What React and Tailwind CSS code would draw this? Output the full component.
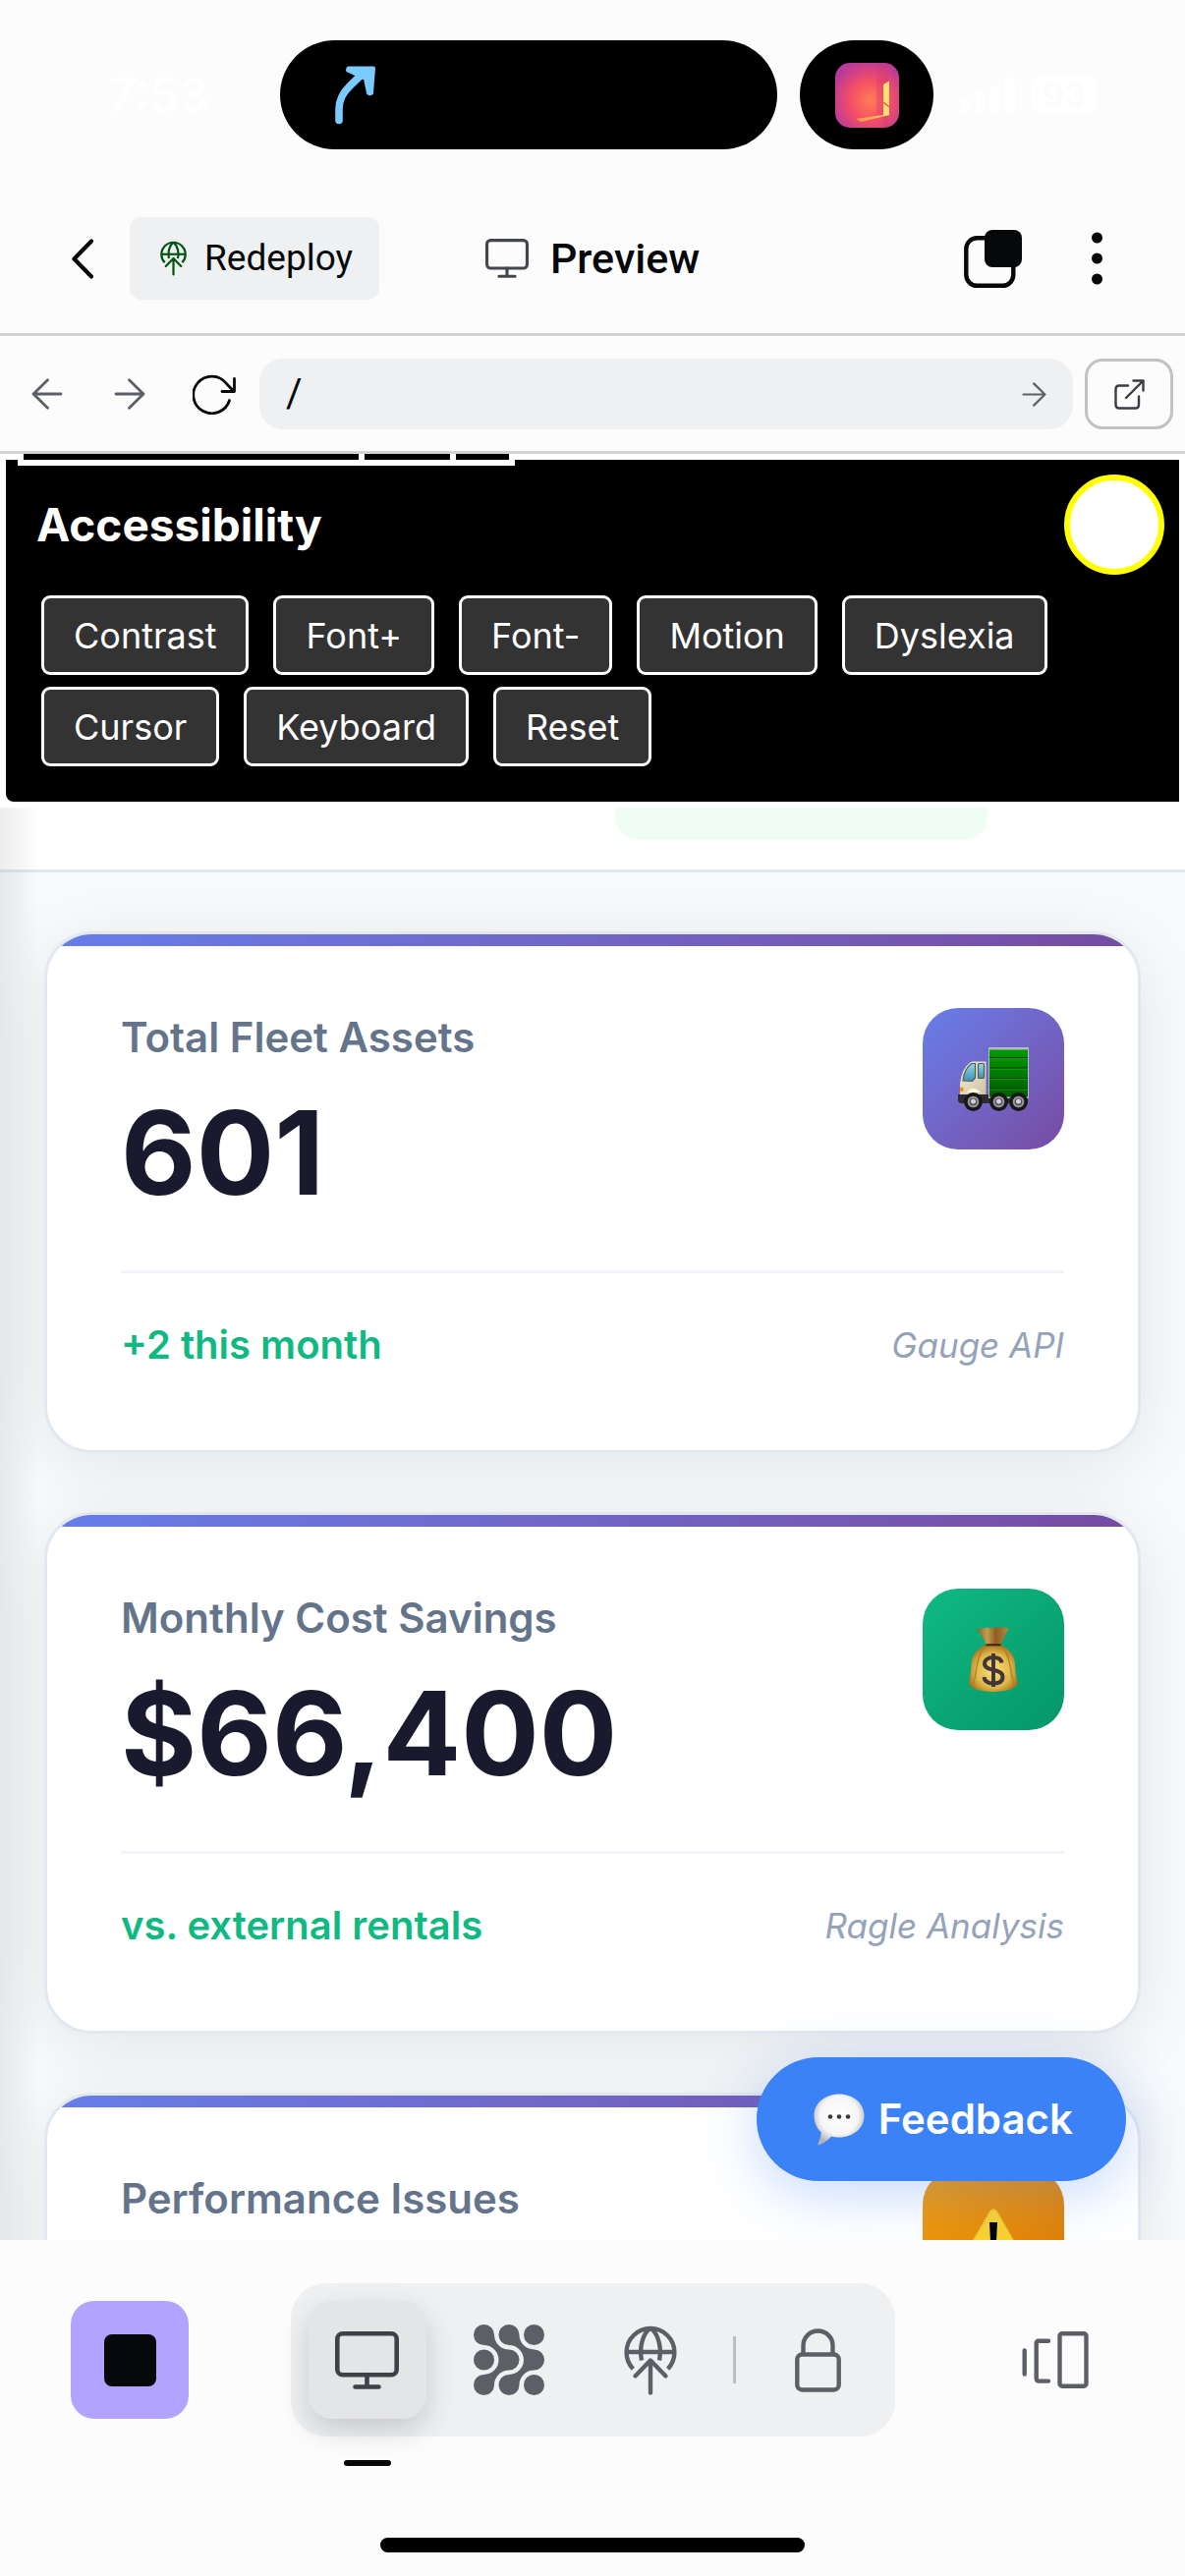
import React from 'react';

const ACCESS_ACTIONS = ['Contrast', 'Font+', 'Font-', 'Motion', 'Dyslexia', 'Cursor', 'Keyboard', 'Reset'];

function MonitorIcon({ className }) {
  return (
    <svg viewBox="0 0 65 59" className={className} fill="none" stroke="currentColor" strokeWidth="4.6" strokeLinecap="round" strokeLinejoin="round" aria-hidden="true">
      <rect x="2.3" y="2.3" width="60.4" height="42" rx="5.5" />
      <path d="M32.5 44.5V56.5M20.5 56.5H44.5" />
    </svg>
  );
}

function GlobeUpIcon({ className }) {
  return (
    <svg viewBox="0 0 54 71" className={className} fill="none" stroke="currentColor" strokeWidth="4.4" strokeLinecap="round" strokeLinejoin="round" aria-hidden="true">
      <g strokeLinecap="butt">
        <path d="M9.3 44.2A24.4 24.4 0 1 1 44.7 44.2" />
        <path d="M2.6 27H51.4" />
        <path d="M27 2.6C18.500 9 15.500 23 18 35.500M27 2.600C35.500 9 38.500 23 36 35.500" />
      </g>
      <path d="M27 36V68.500M11.500 51.500L27 35.500L42.500 51.500" />
    </svg>
  );
}

function BlobGridIcon({ className }) {
  const blob =
    'M10.5 0A15 15 0 0 0 25.5 15A10.5 10.5 0 0 1 25.5 36A15 15 0 0 0 10.5 51A10.500 10.500 0 1 1 0 40.500A15 15 0 0 0 0 10.500A10.500 10.500 0 1 1 10.500 0Z';
  return (
    <svg viewBox="-10.5 -10.5 72 72" className={className} fill="currentColor" aria-hidden="true">
      <path d={blob} />
      <path d={blob} transform="translate(25.5 0)" />
      <circle cx="0" cy="25.5" r="10.5" />
      <circle cx="51" cy="0" r="10.5" />
      <circle cx="51" cy="51" r="10.5" />
    </svg>
  );
}

function ArrowIcon({ className }) {
  return (
    <svg viewBox="0 0 32 32" className={className} fill="none" stroke="currentColor" strokeWidth="2.8" strokeLinecap="round" strokeLinejoin="round" aria-hidden="true">
      <path d="M2 16H30M15.500 1.800L30 16L15.500 30.200" />
    </svg>
  );
}

function TruckArt() {
  return (
    <svg viewBox="0 0 72 65" className="h-[65px] w-[72px]" aria-hidden="true">
      <defs>
        <linearGradient id="box" x1="0" y1="0" x2="0" y2="1">
          <stop offset="0" stopColor="#009a00" />
          <stop offset="1" stopColor="#005c00" />
        </linearGradient>
        <linearGradient id="cab" x1="0" y1="0" x2="1" y2="1">
          <stop offset="0" stopColor="#f3ecd6" />
          <stop offset="1" stopColor="#cfc4a6" />
        </linearGradient>
        <linearGradient id="glass" x1="0" y1="0" x2="0" y2="1">
          <stop offset="0" stopColor="#8fdbe6" />
          <stop offset="1" stopColor="#3d8fb5" />
        </linearGradient>
      </defs>
      <path d="M0 48H71V57H3Q0 57 0 53Z" fill="#2c2c30" />
      <rect x="31" y="0" width="41" height="52" fill="#b5b8c6" />
      <rect x="32" y="2.500" width="39" height="48" fill="url(#box)" />
      <path d="M32 10.500H71M32 21H71M32 31.500H71M32 42H71" stroke="#013f01" strokeWidth="1.200" />
      <path d="M32 11.700H71M32 22.200H71M32 32.700H71M32 43.200H71" stroke="#22a322" strokeWidth=".7" />
      <path d="M2 48V37Q4 21 13 15Q14 14.500 16 14.500H28.500V48Z" fill="url(#cab)" />
      <path d="M5 34Q6 22 14 16.500H17.500V31L14.500 34.500Z" fill="url(#glass)" stroke="#57594f" strokeWidth="1.200" />
      <rect x="20.500" y="16.500" width="6" height="15" rx="1" fill="url(#glass)" stroke="#57594f" strokeWidth="1.200" />
      <path d="M9 46Q15 38 23 46Z" fill="#fff8dc" />
      <rect x="2" y="40.500" width="3.500" height="4.500" rx="1.500" fill="#ff8a00" />
      {[15.5, 41.5, 61.5].map((cx) => (
        <g key={cx}>
          <circle cx={cx} cy="55.500" r="9.400" fill="#17171a" />
          <circle cx={cx} cy="55.500" r="6" fill="#56565c" />
          <circle cx={cx} cy="55.500" r="4.800" fill="none" stroke="#a4a4aa" strokeWidth="1.500" />
          <circle cx={cx} cy="55" r="2.500" fill="#d2d2d6" />
        </g>
      ))}
    </svg>
  );
}

function MoneyBagArt() {
  return (
    <svg viewBox="0 0 50 66" className="h-[66px] w-[50px]" aria-hidden="true">
      <defs>
        <radialGradient id="bag" cx=".5" cy=".55" r=".6">
          <stop offset="0" stopColor="#fbe07c" />
          <stop offset=".6" stopColor="#dfb848" />
          <stop offset="1" stopColor="#9a6416" />
        </radialGradient>
        <linearGradient id="neck" x1="0" y1="0" x2="1" y2="0">
          <stop offset="0" stopColor="#8a5f22" />
          <stop offset=".35" stopColor="#c79a4e" />
          <stop offset=".6" stopColor="#8d5f22" />
          <stop offset="1" stopColor="#b98a45" />
        </linearGradient>
      </defs>
      <path d="M7 1.500Q13 3 18 .5Q23 2 27 .3Q34 0 41 1.500Q37 7 32.500 18.500H18Q14 8 7 1.500Z" fill="url(#neck)" />
      <path d="M17.500 18Q4 24 2.500 36Q2 48 0 57Q3 65.500 25 66Q46 65.500 50 57.500Q47 48 47 36Q45 24 32.500 18Z" fill="url(#bag)" />
      <path d="M18 19Q8 27 6.500 52M32 19Q42 27 43.500 52M12 26Q8 38 5 58M38 26Q43 38 45.500 58" fill="none" stroke="#a87422" strokeWidth="1" opacity=".7" />
      <path d="M17.500 18.200H32.500" stroke="#3e2508" strokeWidth="2" />
      <path d="M33.500 36.500C33 32.500 29.500 31 25 31C19.500 31 16 33.500 16 37.500C16 46 34.500 41.500 34.500 51C34.500 55.500 30.500 57.500 25 57.500C19.500 57.500 16 55.500 15.500 51M25 27V61" fill="none" stroke="#43363a" strokeWidth="4" />
    </svg>
  );
}

function WarningArt() {
  return (
    <svg viewBox="0 0 72 64" className="h-[64px] w-[72px]" aria-hidden="true">
      <path d="M32.500 2.500Q36 -1.500 39.500 2.500L71 57Q73 63 67 64H5Q-1 63 1 57Z" fill="#fbd22f" stroke="#f5b324" strokeWidth="1" />
      <path d="M32 14H40L38.500 43H33.500Z" fill="#000" />
      <circle cx="36" cy="52" r="4.500" fill="#000" />
    </svg>
  );
}

function SpeechArt() {
  return (
    <svg viewBox="0 0 52 53" className="h-[53px] w-[52px]" aria-hidden="true">
      <defs>
        <radialGradient id="speech" cx=".5" cy=".42" r=".58">
          <stop offset="0" stopColor="#ffffff" />
          <stop offset=".65" stopColor="#f6f6f6" />
          <stop offset="1" stopColor="#b4b4b4" />
        </radialGradient>
      </defs>
      <path d="M26 .5C40.500 .5 51.500 10 51.500 22.500C51.500 35 40.500 44.500 26 44.500C23 44.500 20.500 44.200 18 43.500C14 48 9 51.500 4.500 52.500C4 51 8 45 7.500 39C3 35 .5 29 .5 22.500C.5 10 11.500 .5 26 .5Z" fill="url(#speech)" />
      <g fill="#3a3a3a">
        <circle cx="17" cy="23.500" r="2.300" />
        <circle cx="26" cy="23.500" r="2.300" />
        <circle cx="35" cy="23.500" r="2.300" />
      </g>
    </svg>
  );
}

function AlbumArt() {
  return (
    <svg viewBox="0 0 65 66" className="h-[66px] w-[65px] rounded-[15px]" aria-hidden="true">
      <defs>
        <radialGradient id="album" cx=".55" cy=".58" r=".62">
          <stop offset="0" stopColor="#ff7d56" />
          <stop offset=".5" stopColor="#f54f64" />
          <stop offset="1" stopColor="#b93a98" />
        </radialGradient>
        <linearGradient id="beam" x1="0" y1="0" x2="1" y2="0">
          <stop offset="0" stopColor="#ff8b4e" />
          <stop offset="1" stopColor="#ffd76a" />
        </linearGradient>
      </defs>
      <rect width="65" height="66" fill="url(#album)" />
      <path d="M42 6L54 0V66H49V54L42 52Z" fill="#d83a70" opacity=".35" />
      <path d="M49 53L55 51.500V53L26 60L21 57Z" fill="url(#beam)" />
      <path d="M49 22L55 18.500V53L49 54Z" fill="#ffe070" />
      <path d="M49 40L55 45" stroke="#e8593e" strokeWidth="1.500" />
    </svg>
  );
}

function StatusBar() {
  return (
    <div className="flex items-center pt-[41px] pb-[35px] text-white">
      <span className="w-[285px] pl-[111px] text-[48px] leading-[60px] font-semibold">7:53</span>
      <div className="flex h-[111px] flex-1 items-center rounded-full bg-black pl-[56px]">
        <svg viewBox="0 0 42 60" className="h-[60px] w-[42px]" fill="none" stroke="#7ccbff" aria-hidden="true">
          <path d="M4 55.500V44C4 33 9 26.500 15 20.500L30 6" strokeWidth="7.600" strokeLinecap="round" />
          <path d="M13.500 2.500H39L37 27.500Q35.500 29 34 27.500L31 13L13 4.500Z" fill="#7ccbff" strokeWidth="4" strokeLinejoin="round" />
        </svg>
      </div>
      <div className="ml-[23px] flex h-[111px] w-[136px] items-center justify-center rounded-full bg-black">
        <AlbumArt />
      </div>
      <div className="flex w-[256px] items-center gap-4 pl-7">
        <svg viewBox="0 0 55 35" className="h-[35px] w-[55px]" fill="currentColor" aria-hidden="true">
          <rect x="0" y="22" width="10" height="13" rx="3" />
          <rect x="15" y="15" width="10" height="20" rx="3" />
          <rect x="30" y="8" width="10" height="27" rx="3" />
          <rect x="45" y="0" width="10" height="35" rx="3" />
        </svg>
        <span className="rounded-xl bg-white px-3 text-[34px] leading-[39px] font-semibold text-[#fcfcfc]">93</span>
      </div>
    </div>
  );
}

function TitleBar() {
  return (
    <header className="grid grid-cols-[1fr_auto_1fr] items-center border-b-[3px] border-[#d4d4d4] px-12 py-[34px] font-[Roboto,sans-serif] text-[#07080a]">
      <div className="flex items-center gap-3">
        <button type="button" aria-label="Back" className="flex h-[84px] w-[72px] items-center justify-center">
          <svg viewBox="0 0 22 41" className="h-[41px] w-[22px]" fill="none" stroke="currentColor" strokeWidth="4.200" strokeLinecap="round" strokeLinejoin="round" aria-hidden="true">
            <path d="M20 2.500L2.500 20.500L20 38.500" />
          </svg>
        </button>
        <button type="button" className="flex h-[84px] items-center gap-[18px] rounded-xl bg-[#eff0f2] pr-[27px] pl-[31px] text-[37px]">
          <GlobeUpIcon className="h-[36px] w-[27px] text-[#00540f]" />
          Redeploy
        </button>
      </div>
      <h1 className="flex items-center gap-[22px] text-[43px] leading-[60px] font-medium">
        <MonitorIcon className="h-[40px] w-[44px] text-[#45474f]" />
        Preview
      </h1>
      <div className="flex items-center justify-end gap-[34px] pr-[6px]">
        <button type="button" aria-label="Switch layout" className="flex h-[84px] w-[72px] items-center justify-center">
          <svg viewBox="0 0 59 59" className="h-[59px] w-[59px]" aria-hidden="true">
            <rect x="2.300" y="8.300" width="48" height="48.500" rx="11" fill="none" stroke="currentColor" strokeWidth="4.400" />
            <rect x="21" y="0" width="38" height="38" rx="8" fill="currentColor" />
          </svg>
        </button>
        <button type="button" aria-label="More options" className="flex h-[84px] w-[72px] items-center justify-center">
          <svg viewBox="0 0 11 54" className="h-[54px] w-[11px]" fill="currentColor" aria-hidden="true">
            <circle cx="5.500" cy="6" r="5.500" />
            <circle cx="5.500" cy="27" r="5.500" />
            <circle cx="5.500" cy="48" r="5.500" />
          </svg>
        </button>
      </div>
    </header>
  );
}

function AddressBar() {
  return (
    <div className="flex items-center gap-3 border-b-[3px] border-[#d4d4d4] px-3 pt-[23px] pb-[22px] text-[#5d5f67]">
      <button type="button" aria-label="Go back" className="flex h-[72px] w-[72px] items-center justify-center">
        <ArrowIcon className="h-[32px] w-[32px] rotate-180" />
      </button>
      <button type="button" aria-label="Go forward" className="flex h-[72px] w-[72px] items-center justify-center">
        <ArrowIcon className="h-[32px] w-[32px]" />
      </button>
      <button type="button" aria-label="Reload" className="flex h-[72px] w-[72px] items-center justify-end pr-3 text-[#07080a]">
        <svg viewBox="0 0 44 41" className="h-[41px] w-[44px]" fill="none" stroke="currentColor" strokeWidth="2.800" strokeLinecap="round" strokeLinejoin="round" aria-hidden="true">
          <path d="M37.500 26.500A18.800 18.800 0 1 1 34.500 9.500L42 17.500M42.500 4.500V17.500H30" />
        </svg>
      </button>
      <form className="flex h-[72px] min-w-0 flex-1 items-center rounded-3xl bg-[#eff0f2] pr-[27px] pl-[27px]" onSubmit={(e) => e.preventDefault()}>
        <input aria-label="Page path" defaultValue="/" className="min-w-0 flex-1 bg-transparent font-[Roboto,sans-serif] text-[40px] leading-[48px] text-[#07080a] outline-none" />
        <button type="submit" aria-label="Open path">
          <ArrowIcon className="h-[25px] w-[25px]" />
        </button>
      </form>
      <button type="button" aria-label="Open in new tab" className="flex h-[72px] w-[90px] items-center justify-center rounded-[18px] border-[3px] border-[#c0c3c2] text-[#3b3d45]">
        <svg viewBox="0 0 31 31" className="h-[31px] w-[31px]" fill="none" stroke="currentColor" strokeWidth="2.400" strokeLinecap="round" strokeLinejoin="round" aria-hidden="true">
          <path d="M14 6.500H5Q1.500 6.500 1.500 10V26Q1.500 29.500 5 29.500H21.500Q25 29.500 25 26V17.500M19.500 1.500H29.500V11.500M29.500 1.500L12 19" />
        </svg>
      </button>
    </div>
  );
}

function AccessibilityPanel() {
  return (
    <section className="relative rounded-bl-[14px] border-[6px] border-white bg-black pb-9 text-white">
      <div className="absolute -top-[6px] left-3 flex gap-[6px] bg-white px-[6px] pb-[6px]">
        <div className="h-[6px] w-[341px] bg-black" />
        <div className="h-[6px] w-[87px] bg-black" />
        <div className="h-[6px] w-[54px] bg-black" />
      </div>
      <div className="flex items-center justify-between pt-[15px] pr-[15px] pl-[31px]">
        <h2 className="text-[46px] leading-[60px] font-bold">Accessibility</h2>
        <button type="button" aria-label="Close accessibility panel" className="h-[102px] w-[102px] rounded-full border-[6px] border-[#ffff00] bg-white" />
      </div>
      <div className="mt-[21px] flex flex-wrap gap-x-[25px] gap-y-3 pl-9">
        {ACCESS_ACTIONS.map((name) => (
          <button key={name} type="button" className="h-[81px] rounded-[9px] border-[3px] border-white bg-[#333333] px-[30px] text-[36px] leading-[48px]">
            {name}
          </button>
        ))}
      </div>
    </section>
  );
}

function MetricCard({ label, value, note, source, tile, children }) {
  return (
    <article className="overflow-hidden rounded-[48px] border-[3px] border-[#e2e8f0] bg-white shadow-[0_12px_72px_rgba(0,0,0,0.09)]">
      <div className="h-3 bg-linear-to-r from-[#667eea] to-[#764ba2]" />
      <div className="px-[75px] pt-[63px] pb-[75px]">
        <div className="flex items-start justify-between pb-12">
          <div>
            <h3 className="text-[42px] leading-[60px] font-semibold text-[#64748b]">{label}</h3>
            <p className="mt-[15px] text-[118px] leading-[144px] font-bold text-[#1a1a2e]">{value}</p>
          </div>
          <div className={`flex h-[144px] w-[144px] shrink-0 items-center justify-center rounded-[36px] ${tile}`}>{children}</div>
        </div>
        <div className="flex items-center justify-between border-t-[3px] border-[#f1f5f9] pt-[43px] pb-[2px]">
          <span className="text-[40px] leading-[60px] font-semibold text-[#10b981]">{note}</span>
          <span className="text-[35px] leading-[60px] text-[#94a3b8] italic">{source}</span>
        </div>
      </div>
    </article>
  );
}

function PreviewPage() {
  return (
    <main className="relative min-h-0 flex-1 overflow-hidden bg-[#f8fafc]">
      <div className="bg-white">
        <AccessibilityPanel />
      </div>
      <div className="relative">
        <div className="flex justify-end border-b-[3px] border-[#e2e8f0] bg-white pr-[201px] pb-[30px]">
          <div className="h-[33px] w-[379px] rounded-b-3xl bg-[#f0fdf4]" />
        </div>
        <div className="flex flex-col gap-[60px] px-[45px] pt-[60px]">
          <MetricCard label="Total Fleet Assets" value="601" note="+2 this month" source="Gauge API" tile="bg-linear-to-br from-[#667eea] to-[#764ba2]">
            <TruckArt />
          </MetricCard>
          <MetricCard label="Monthly Cost Savings" value="$66,400" note="vs. external rentals" source="Ragle Analysis" tile="bg-linear-to-br from-[#10b981] to-[#059669]">
            <MoneyBagArt />
          </MetricCard>
          <MetricCard label="Performance Issues" value="" note="" source="" tile="bg-linear-to-br from-[#f59e0b] to-[#d97706]">
            <WarningArt />
          </MetricCard>
        </div>
        <div className="pointer-events-none absolute inset-y-0 left-0 w-[42px] bg-linear-to-r from-black/7 to-transparent" />
      </div>
      <button type="button" className="absolute right-[60px] bottom-[60px] flex h-[126px] items-center gap-[14px] rounded-full bg-[#3b82f6] pr-[54px] pl-[58px] text-[42px] leading-[60px] font-semibold text-white shadow-[0_12px_60px_rgba(59,130,246,0.3)]">
        <SpeechArt />
        Feedback
      </button>
    </main>
  );
}

function Dock() {
  return (
    <footer className="bg-[#fcfcfc] pt-11 pb-6 text-[#5d5f67]">
      <div className="flex items-center justify-between px-[72px]">
        <button type="button" aria-label="Stop" className="flex h-[120px] w-[120px] items-center justify-center rounded-3xl bg-[#b1a3ff]">
          <span className="h-[53px] w-[53px] rounded-lg bg-[#07080a]" />
        </button>
        <nav className="flex items-center gap-6 rounded-[36px] bg-[#eff0f2] p-[18px]">
          <button type="button" aria-label="Preview" aria-current="page" className="relative flex h-[120px] w-[120px] items-center justify-center rounded-3xl bg-[#e4e5e7] text-[#3f4048] shadow-[0_12px_30px_rgba(0,0,0,0.16)]">
            <MonitorIcon className="h-[59px] w-[65px]" />
            <span className="absolute -bottom-12 h-[6px] w-12 rounded-full bg-[#07080a]" />
          </button>
          <button type="button" aria-label="Agent" className="flex h-[120px] w-[120px] items-center justify-center">
            <BlobGridIcon className="h-[72px] w-[72px]" />
          </button>
          <button type="button" aria-label="Deployments" className="flex h-[120px] w-[120px] items-center justify-center">
            <GlobeUpIcon className="h-[71px] w-[54px]" />
          </button>
          <span className="h-12 w-[3px] bg-[#bcbec0]" />
          <button type="button" aria-label="Secrets" className="flex h-[120px] w-[120px] items-center justify-center">
            <svg viewBox="0 0 47 65" className="h-[65px] w-[47px]" fill="none" stroke="currentColor" strokeWidth="4.400" strokeLinejoin="round" aria-hidden="true">
              <rect x="2.300" y="26.500" width="42.400" height="36" rx="5" />
              <path d="M8.500 26V17.500A15 15 0 0 1 38.500 17.500V26" />
            </svg>
          </button>
        </nav>
        <button type="button" aria-label="Show tabs" className="flex h-[120px] w-[120px] items-center justify-center">
          <svg viewBox="0 0 68 58" className="h-[58px] w-[68px]" fill="none" stroke="currentColor" strokeWidth="4.400" strokeLinecap="round" strokeLinejoin="round" aria-hidden="true">
            <path d="M2.700 19.500V43.500M27 9.700H17.500Q14.700 9.700 14.700 12.500V47.800Q14.700 50.600 17.500 50.600H27" />
            <rect x="38.500" y="2.300" width="27" height="53.500" rx="2.500" />
          </svg>
        </button>
      </div>
      <div className="mx-auto mt-[103px] h-[15px] w-[432px] rounded-full bg-black" />
    </footer>
  );
}

export default function App() {
  return (
    <div className="flex h-screen flex-col overflow-hidden bg-[#fcfcfc] font-[Inter,sans-serif]">
      <StatusBar />
      <TitleBar />
      <AddressBar />
      <PreviewPage />
      <Dock />
    </div>
  );
}
